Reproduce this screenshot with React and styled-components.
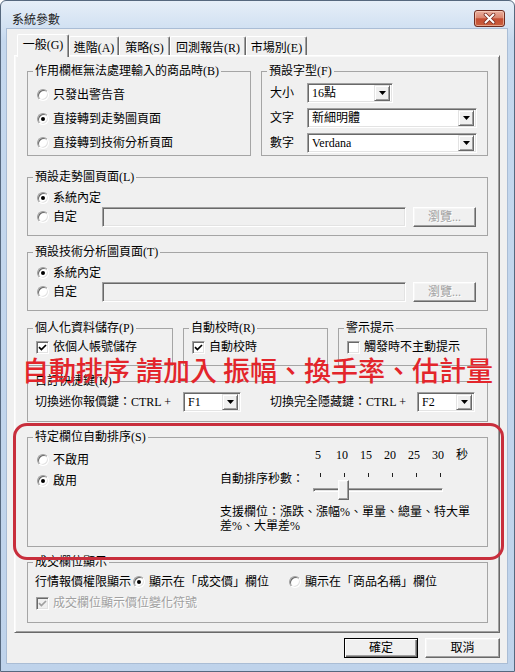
import React from "react";
import styled, { createGlobalStyle } from "styled-components";

const UI_FONT = `"Liberation Serif", "Noto Sans CJK TC", serif`;

const GlobalStyle = createGlobalStyle`
  html, body { margin: 0; padding: 0; background: #fff; }
  body { font-family: ${UI_FONT}; font-size: 12px; color: #000; }
  *, *::before, *::after { box-sizing: border-box; }
`;

const Window = styled.div`
  position: relative;
  width: 515px;
  height: 672px;
  border: 1px solid #56687e;
  border-radius: 6px 6px 0 0;
  background: linear-gradient(180deg, #e6eef8 0px, #d2e1f2 26px, #c5d8ee 40px, #bfd3eb 100%);
  display: flex;
  flex-direction: column;
  overflow: hidden;
`;

const TitleBar = styled.div`
  height: 28px;
  flex: none;
  display: flex;
  align-items: flex-start;
  justify-content: space-between;
  padding: 0 9px 0 11px;
`;

const TitleText = styled.span`
  margin-top: 12px;
  font-size: 12px;
  line-height: 14px;
  color: #1e1e1e;
`;

const CloseButton = styled.div`
  margin-top: 9px;
  width: 31px;
  height: 17px;
  border: 1px solid #6e2b20;
  border-radius: 3px;
  background: linear-gradient(180deg, #eab0a0 0%, #db8770 45%, #c54d32 52%, #c9603e 100%);
  box-shadow: inset 0 0 0 1px rgba(255, 220, 200, 0.55);
  display: flex;
  align-items: center;
  justify-content: center;
`;

const Client = styled.div`
  flex: 1;
  margin: 0 7px 8px 6px;
  background: #f0f0f0;
  box-shadow: 0 0 0 1px #aabdd5;
  padding: 5px 7px 5px 7px;
  display: flex;
  flex-direction: column;
`;

const TabStrip = styled.div`
  height: 23px;
  margin-bottom: -2px;
  padding-left: 3px;
  display: flex;
  align-items: flex-end;
  position: relative;
  z-index: 2;
`;

const Tab = styled.div`
  width: ${(p) => p.$w}px;
  height: ${(p) => (p.$active ? 23 : 19)}px;
  margin-bottom: ${(p) => (p.$active ? 0 : 2)}px;
  background: #f0f0f0;
  border-top: 1px solid #fff;
  border-left: 1px solid #fff;
  border-right: 1px solid #696969;
  box-shadow: inset -1px 0 0 #a0a0a0;
  border-radius: 2px 2px 0 0;
  display: flex;
  align-items: center;
  justify-content: center;
  padding: ${(p) => (p.$active ? "0 0 3px" : "3px 0 0")};
  font-size: 12px;
  line-height: 14px;
  white-space: nowrap;
`;

const Panel = styled.div`
  height: 578px;
  flex: none;
  border: 1px solid;
  border-color: #fff #696969 #696969 #fff;
  box-shadow: inset 1px 1px 0 #f9f9f9, inset -1px -1px 0 #a0a0a0;
  padding: 8px 11px 0 12px;
  display: flex;
  flex-direction: column;
`;

const Columns = styled.div`
  display: grid;
  grid-template-columns: ${(p) => p.$cols};
  column-gap: 10px;
  margin-top: ${(p) => p.$mt ?? 0}px;
`;

const Group = styled.fieldset`
  margin: ${(p) => p.$mt ?? 0}px 0 0;
  padding: 0;
  min-width: 0;
  height: ${(p) => p.$h}px;
  border: 1px solid #a5a5a5;
`;

const Legend = styled.legend`
  margin-left: 5px;
  padding: 0 2px;
  font-size: 12px;
  line-height: 14px;
  white-space: nowrap;
`;

const Stack = styled.div`
  display: flex;
  flex-direction: column;
  gap: ${(p) => p.$gap ?? 0}px;
  padding: ${(p) => p.$pt ?? 0}px 0 0 ${(p) => p.$pl ?? 0}px;
`;

const Line = styled.div`
  display: flex;
  align-items: center;
  height: ${(p) => p.$h ?? 20}px;
  padding-left: ${(p) => p.$pl ?? 0}px;
`;

const FieldLabel = styled.span`
  width: ${(p) => (p.$w ? `${p.$w}px` : "auto")};
  margin-left: ${(p) => p.$ml ?? 0}px;
  margin-top: ${(p) => p.$mt ?? 0}px;
  flex: none;
  line-height: 14px;
  white-space: nowrap;
`;

const Option = styled.label`
  display: flex;
  align-items: center;
  gap: 4px;
  flex: none;
  height: ${(p) => p.$h ?? 16}px;
  width: ${(p) => (p.$w ? `${p.$w}px` : "auto")};
  margin-left: ${(p) => p.$ml ?? 0}px;
  line-height: 14px;
  white-space: nowrap;
  color: ${(p) => (p.$disabled ? "#a0a0a0" : "#000")};
  text-shadow: ${(p) => (p.$disabled ? "1px 1px 0 #fff" : "none")};
`;

const RadioCircle = styled.span`
  width: 12px;
  height: 12px;
  flex: none;
  border-radius: 50%;
  background: #fff;
  border: 1px solid;
  border-color: #a0a0a0 #fff #fff #a0a0a0;
  box-shadow: inset 1px 1px 0 #696969, inset -1px -1px 0 #e3e3e3;
  display: flex;
  align-items: center;
  justify-content: center;
`;

const RadioDot = styled.span`
  width: 4px;
  height: 4px;
  border-radius: 50%;
  background: #000;
`;

const CheckSquare = styled.span`
  width: 13px;
  height: 13px;
  flex: none;
  background: ${(p) => (p.$disabled ? "#f0f0f0" : "#fff")};
  border: 1px solid;
  border-color: #a0a0a0 #fff #fff #a0a0a0;
  box-shadow: inset 1px 1px 0 #696969, inset -1px -1px 0 #e3e3e3;
  display: flex;
  align-items: center;
  justify-content: center;
`;

const Combo = styled.div`
  width: ${(p) => p.$w}px;
  height: 20px;
  flex: none;
  background: #fff;
  border: 1px solid;
  border-color: #a0a0a0 #fff #fff #a0a0a0;
  box-shadow: inset 1px 1px 0 #696969, inset -1px -1px 0 #e3e3e3;
  display: flex;
  align-items: center;
  padding: 1px 2px 1px 2px;
`;

const ComboText = styled.span`
  flex: 1;
  padding-left: 2px;
  line-height: 14px;
  white-space: nowrap;
  overflow: hidden;
`;

const ComboButton = styled.span`
  width: 16px;
  height: 16px;
  flex: none;
  background: #f0f0f0;
  border: 1px solid;
  border-color: #e3e3e3 #696969 #696969 #e3e3e3;
  box-shadow: inset 1px 1px 0 #fff, inset -1px -1px 0 #a0a0a0;
  display: flex;
  align-items: center;
  justify-content: center;
`;

const TextField = styled.div`
  width: ${(p) => p.$w}px;
  height: 20px;
  flex: none;
  background: #f0f0f0;
  border: 1px solid;
  border-color: #a0a0a0 #fff #fff #a0a0a0;
  box-shadow: inset 1px 1px 0 #696969, inset -1px -1px 0 #e3e3e3;
`;

const PushButton = styled.button`
  width: ${(p) => p.$w}px;
  height: ${(p) => p.$h ?? 20}px;
  margin-left: ${(p) => p.$ml ?? 0}px;
  flex: none;
  background: #f0f0f0;
  border: 1px solid;
  border-color: ${(p) => (p.$default ? "#000" : "#fff #696969 #696969 #fff")};
  box-shadow: ${(p) =>
    p.$default
      ? "inset 1px 1px 0 #fff, inset -1px -1px 0 #696969, inset -2px -2px 0 #a0a0a0"
      : "inset -1px -1px 0 #a0a0a0, inset 1px 1px 0 #f6f6f6"};
  font-family: ${UI_FONT};
  font-size: 12px;
  line-height: 14px;
  padding: 0;
  color: ${(p) => (p.$muted ? "#a0a0a0" : "#000")};
  text-shadow: ${(p) => (p.$muted ? "1px 1px 0 #fff" : "none")};
`;

const SortBody = styled.div`
  display: grid;
  grid-template-columns: 192px 1fr;
`;

const SortRight = styled.div`
  padding-top: 4px;
  display: flex;
  flex-direction: column;
`;

const NumRow = styled.div`
  display: flex;
  margin-left: 86px;
  height: 14px;
`;

const NumCell = styled.span`
  width: 24px;
  text-align: center;
  line-height: 14px;
`;

const SliderRow = styled.div`
  display: flex;
  align-items: flex-start;
  height: 38px;
`;

const SliderBox = styled.div`
  position: relative;
  width: 168px;
  height: 38px;
  padding-top: 11px;
`;

const TickRow = styled.div`
  display: flex;
  gap: 23px;
  padding-left: 14px;
  height: 4px;
`;

const Tick = styled.span`
  width: 1px;
  height: 4px;
  background: #202020;
`;

const Track = styled.div`
  margin: 11px 0 0 7px;
  width: 130px;
  height: 4px;
  border: 1px solid;
  border-color: #a0a0a0 #fff #fff #a0a0a0;
  box-shadow: inset 1px 1px 0 #696969;
  background: #e3e3e3;
`;

const Thumb = styled.div`
  position: absolute;
  left: 32px;
  top: 18px;
  width: 11px;
  height: 20px;
  background: #f0f0f0;
  border: 1px solid;
  border-color: #fff #696969 #696969 #fff;
  box-shadow: inset -1px -1px 0 #a0a0a0, inset 1px 1px 0 #f6f6f6;
`;

const Note = styled.p`
  margin: 5px 0 0;
  width: 256px;
  line-height: 14px;
`;

const ButtonRow = styled.div`
  margin-top: 5px;
  height: 20px;
  display: flex;
  justify-content: flex-end;
  gap: 7px;
`;

const Highlight = styled.div`
  position: absolute;
  left: 12px;
  top: 422px;
  width: 491px;
  height: 137px;
  border: 3px solid #c82e3c;
  border-radius: 14px;
  pointer-events: none;
`;

const Annotation = styled.div`
  position: absolute;
  left: 21px;
  top: 355px;
  display: flex;
  gap: 6px;
  font-family: "Noto Sans CJK TC", "Noto Sans CJK SC", sans-serif;
  font-size: 27px;
  line-height: 28px;
  font-weight: 500;
  color: #e3252b;
  white-space: nowrap;
  pointer-events: none;
`;

const Radio = ({ checked }) => <RadioCircle>{checked && <RadioDot />}</RadioCircle>;

const Check = ({ checked, disabled }) => (
  <CheckSquare $disabled={disabled}>
    {checked && (
      <svg width="9" height="9" viewBox="0 0 9 9">
        <polyline
          points="1,4.2 3.4,6.6 8,2"
          fill="none"
          stroke={disabled ? "#a0a0a0" : "#000"}
          strokeWidth="1.7"
        />
      </svg>
    )}
  </CheckSquare>
);

const Select = ({ w, value }) => (
  <Combo $w={w}>
    <ComboText>{value}</ComboText>
    <ComboButton>
      <svg width="7" height="4" viewBox="0 0 7 4">
        <polygon points="0,0 7,0 3.5,4" fill="#000" />
      </svg>
    </ComboButton>
  </Combo>
);

const tabs = [
  { label: "一般(G)", w: 52, active: true },
  { label: "進階(A)", w: 50 },
  { label: "策略(S)", w: 51 },
  { label: "回測報告(R)", w: 76 },
  { label: "市場別(E)", w: 61 },
];

const secondSteps = ["5", "10", "15", "20", "25", "30", "秒"];
const noteWords = ["自動排序", "請加入", "振幅、換手率、估計量"];

export default function App() {
  return (
    <>
      <GlobalStyle />
      <Window>
        <TitleBar>
          <TitleText>系統參數</TitleText>
          <CloseButton>
            <svg width="13" height="11" viewBox="0 0 13 11">
              <path d="M2.5 1.5 L10.5 9.5 M10.5 1.5 L2.5 9.5" stroke="#7a2e22" strokeWidth="3.6" strokeLinecap="round" />
              <path d="M2.5 1.5 L10.5 9.5 M10.5 1.5 L2.5 9.5" stroke="#fff" strokeWidth="2" strokeLinecap="round" />
            </svg>
          </CloseButton>
        </TitleBar>
        <Client>
          <TabStrip>
            {tabs.map((t) => (
              <Tab key={t.label} $w={t.w} $active={t.active}>
                {t.label}
              </Tab>
            ))}
          </TabStrip>
          <Panel>
            <Columns $cols="224px 227px">
              <Group $h={92}>
                <Legend>作用欄框無法處理輸入的商品時(B)</Legend>
                <Stack $pt={7} $pl={9} $gap={4}>
                  <Option $h={20}><Radio />只發出警告音</Option>
                  <Option $h={20}><Radio checked />直接轉到走勢圖頁面</Option>
                  <Option $h={20}><Radio />直接轉到技術分析頁面</Option>
                </Stack>
              </Group>
              <Group $h={92}>
                <Legend>預設字型(F)</Legend>
                <Stack $pt={5} $pl={8} $gap={5}>
                  <Line>
                    <FieldLabel $w={37}>大小</FieldLabel>
                    <Select w={86} value="16點" />
                  </Line>
                  <Line>
                    <FieldLabel $w={37}>文字</FieldLabel>
                    <Select w={170} value="新細明體" />
                  </Line>
                  <Line>
                    <FieldLabel $w={37}>數字</FieldLabel>
                    <Select w={170} value="Verdana" />
                  </Line>
                </Stack>
              </Group>
            </Columns>

            <Group $mt={14} $h={66}>
              <Legend>預設走勢圖頁面(L)</Legend>
              <Stack $pt={6} $pl={9} $gap={1}>
                <Option><Radio checked />系統內定</Option>
                <Line>
                  <Option $w={65}><Radio />自定</Option>
                  <TextField $w={304} />
                  <PushButton $w={63} $ml={7} $muted>瀏覽...</PushButton>
                </Line>
              </Stack>
            </Group>

            <Group $mt={9} $h={66}>
              <Legend>預設技術分析圖頁面(T)</Legend>
              <Stack $pt={6} $pl={9} $gap={1}>
                <Option><Radio checked />系統內定</Option>
                <Line>
                  <Option $w={65}><Radio />自定</Option>
                  <TextField $w={304} />
                  <PushButton $w={63} $ml={7} $muted>瀏覽...</PushButton>
                </Line>
              </Stack>
            </Group>

            <Columns $cols="146px 145px 149px" $mt={10}>
              <Group $h={45}>
                <Legend>個人化資料儲存(P)</Legend>
                <Stack $pt={4} $pl={8}>
                  <Option><Check checked />依個人帳號儲存</Option>
                </Stack>
              </Group>
              <Group $h={45}>
                <Legend>自動校時(R)</Legend>
                <Stack $pt={4} $pl={8}>
                  <Option><Check checked />自動校時</Option>
                </Stack>
              </Group>
              <Group $h={45}>
                <Legend>警示提示</Legend>
                <Stack $pt={4} $pl={8}>
                  <Option><Check />觸發時不主動提示</Option>
                </Stack>
              </Group>
            </Columns>

            <Group $mt={8} $h={48}>
              <Legend>自訂快捷鍵(K)</Legend>
              <Stack $pt={4} $pl={7}>
                <Line>
                  <FieldLabel $w={148}>切換迷你報價鍵：CTRL +</FieldLabel>
                  <Select w={58} value="F1" />
                  <FieldLabel $w={147} $ml={29}>切換完全隱藏鍵：CTRL +</FieldLabel>
                  <Select w={58} value="F2" />
                </Line>
              </Stack>
            </Group>

            <Group $mt={8} $h={117}>
              <Legend>特定欄位自動排序(S)</Legend>
              <SortBody>
                <Stack $pt={8} $pl={9} $gap={5}>
                  <Option><Radio />不啟用</Option>
                  <Option><Radio checked />啟用</Option>
                </Stack>
                <SortRight>
                  <NumRow>
                    {secondSteps.map((s) => (
                      <NumCell key={s}>{s}</NumCell>
                    ))}
                  </NumRow>
                  <SliderRow>
                    <FieldLabel $w={86} $mt={10}>自動排序秒數：</FieldLabel>
                    <SliderBox>
                      <TickRow>
                        {secondSteps.slice(0, 6).map((s) => (
                          <Tick key={s} />
                        ))}
                      </TickRow>
                      <Track />
                      <Thumb />
                    </SliderBox>
                  </SliderRow>
                  <Note>支援欄位：漲跌、漲幅%、單量、總量、特大單差%、大單差%</Note>
                </SortRight>
              </SortBody>
            </Group>

            <Group $mt={8} $h={68}>
              <Legend>成交欄位顯示</Legend>
              <Stack $pt={5} $pl={7} $gap={5}>
                <Line $h={16}>
                  <FieldLabel>行情報價權限顯示</FieldLabel>
                  <Option $ml={2}><Radio checked />顯示在「成交價」欄位</Option>
                  <Option $ml={20}><Radio />顯示在「商品名稱」欄位</Option>
                </Line>
                <Line $h={16} $pl={1}>
                  <Option $disabled><Check checked disabled />成交欄位顯示價位變化符號</Option>
                </Line>
              </Stack>
            </Group>
          </Panel>
          <ButtonRow>
            <PushButton $w={74} $default>確定</PushButton>
            <PushButton $w={75}>取消</PushButton>
          </ButtonRow>
        </Client>
        <Highlight />
        <Annotation>
          {noteWords.map((w) => (
            <span key={w}>{w}</span>
          ))}
        </Annotation>
      </Window>
    </>
  );
}
